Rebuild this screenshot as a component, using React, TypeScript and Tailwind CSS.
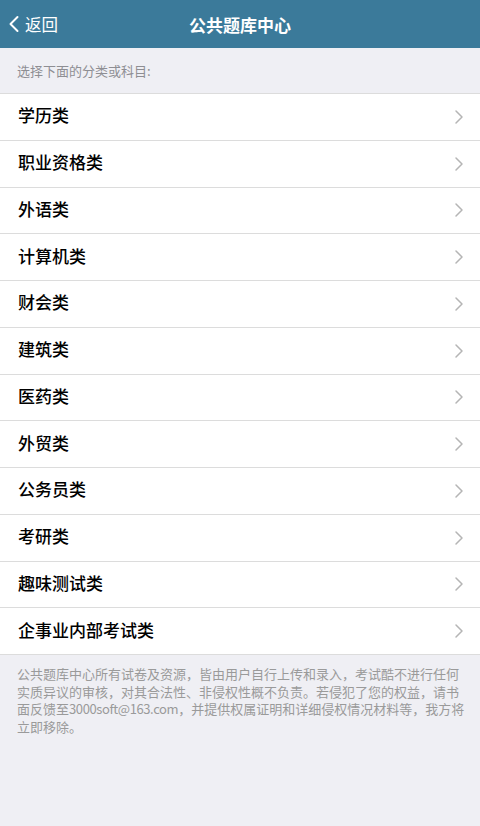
import { ChevronLeft, ChevronRight } from 'lucide-react';

const categories = [
  '学历类',
  '职业资格类',
  '外语类',
  '计算机类',
  '财会类',
  '建筑类',
  '医药类',
  '外贸类',
  '公务员类',
  '考研类',
  '趣味测试类',
  '企事业内部考试类',
];

const font = "font-['Noto_Sans_CJK_SC',sans-serif]";

export default function App() {
  return (
    <div className={`min-h-[826px] bg-[#efeff4] ${font}`}>
      {/* Header */}
      <div className="relative flex h-[48px] items-center justify-center bg-[#3b7a9a]">
        <div className="absolute left-0 top-0 flex h-full items-center text-white">
          <ChevronLeft className="h-[28px] w-[28px]" strokeWidth={1.7} />
          <span className="-ml-[3px] text-[16.5px] leading-none">返回</span>
        </div>
        <h1 className="text-[17px] font-bold leading-none text-white">公共题库中心</h1>
      </div>

      {/* Hint */}
      <div className="flex h-[45px] items-center px-[17px] text-[13px] leading-none text-[#8e8e93]">
        选择下面的分类或科目:
      </div>

      {/* List */}
      <div className="border-t border-[#dcdcdc] bg-white">
        {categories.map((name) => (
          <div
            key={name}
            className="flex h-[46.75px] items-center justify-between border-b border-[#dcdcdc] pl-[18px] pr-[9px]"
          >
            <span className="mb-[4px] text-[17px] font-medium leading-none text-black">{name}</span>
            <ChevronRight className="h-[24px] w-[24px] text-[#b5b5b5]" strokeWidth={1.5} />
          </div>
        ))}
      </div>

      {/* Disclaimer */}
      <p className="pl-[17px] pr-[6px] pt-[10px] text-[13px] leading-[17.5px] text-[#9a9a9a]">
        公共题库中心所有试卷及资源，皆由用户自行上传和录入，考试酷不进行任何
        <br />
        实质异议的审核，对其合法性、非侵权性概不负责。若侵犯了您的权益，请书
        <br />
        面反馈至<span className="tracking-[-0.4px]">3000soft@163.com</span>，并提供权属证明和详细侵权情况材料等，我方将
        <br />
        立即移除。
      </p>
    </div>
  );
}
